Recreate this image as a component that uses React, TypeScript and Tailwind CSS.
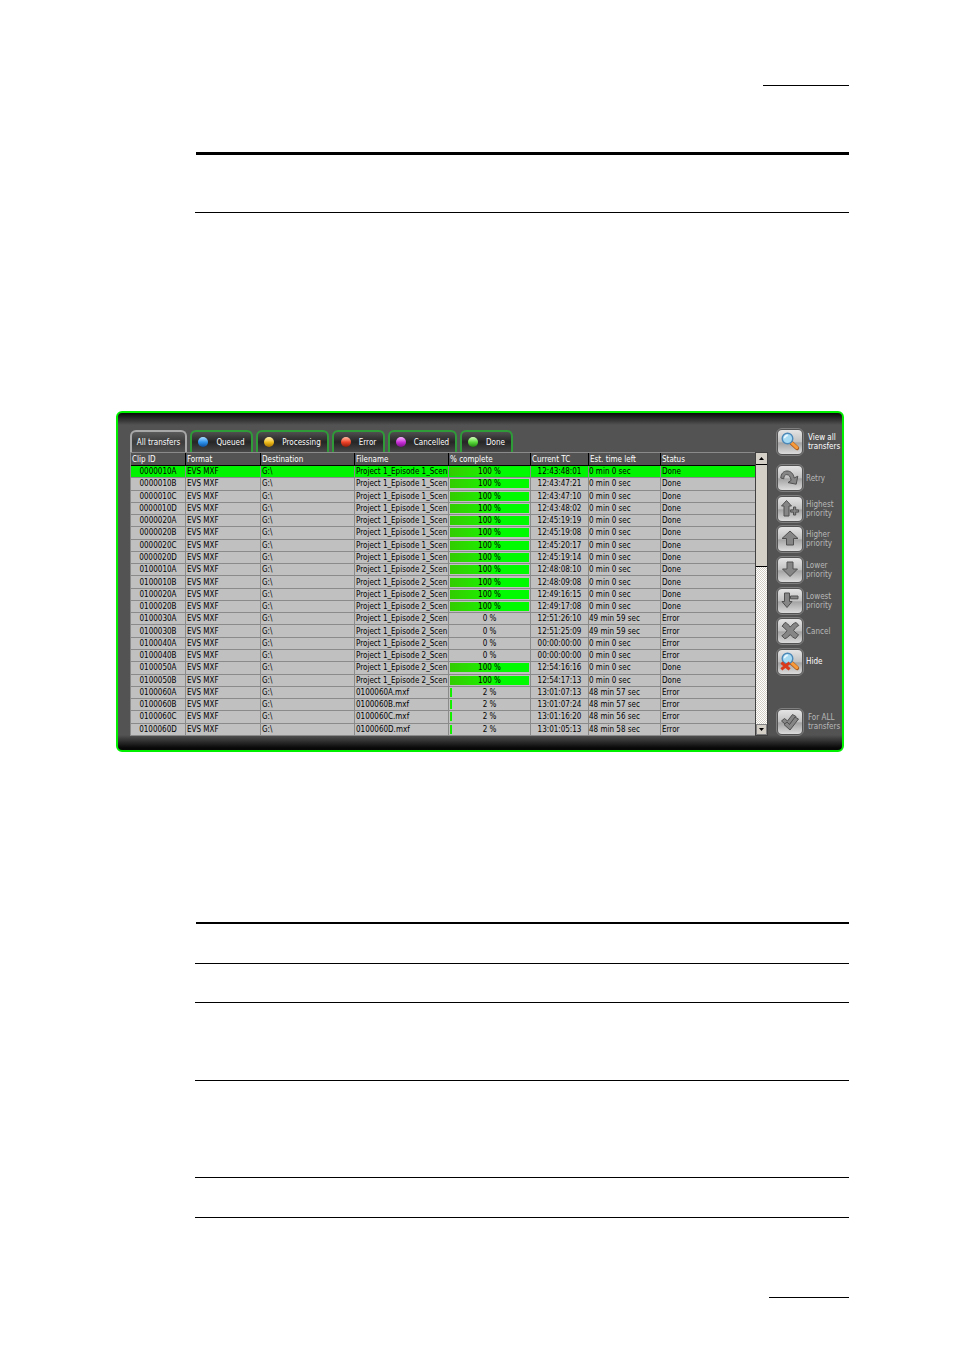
import { useState, type ReactNode } from "react";
import clsx from "clsx";

type Transfer = {
  id: string;
  file: string;
  percent: number;
  timecode: string;
  left: string;
  status: string;
};

const row = (
  id: string,
  file: string,
  percent: number,
  timecode: string,
  left: string,
  status: string
): Transfer => ({ id, file, percent, timecode, left, status });

const EP1 = "Project 1_Episode 1_Scen";
const EP2 = "Project 1_Episode 2_Scen";

const transfers: Transfer[] = [
  row("0000010A", EP1, 100, "12:43:48:01", "0 min 0 sec", "Done"),
  row("0000010B", EP1, 100, "12:43:47:21", "0 min 0 sec", "Done"),
  row("0000010C", EP1, 100, "12:43:47:10", "0 min 0 sec", "Done"),
  row("0000010D", EP1, 100, "12:43:48:02", "0 min 0 sec", "Done"),
  row("0000020A", EP1, 100, "12:45:19:19", "0 min 0 sec", "Done"),
  row("0000020B", EP1, 100, "12:45:19:08", "0 min 0 sec", "Done"),
  row("0000020C", EP1, 100, "12:45:20:17", "0 min 0 sec", "Done"),
  row("0000020D", EP1, 100, "12:45:19:14", "0 min 0 sec", "Done"),
  row("0100010A", EP2, 100, "12:48:08:10", "0 min 0 sec", "Done"),
  row("0100010B", EP2, 100, "12:48:09:08", "0 min 0 sec", "Done"),
  row("0100020A", EP2, 100, "12:49:16:15", "0 min 0 sec", "Done"),
  row("0100020B", EP2, 100, "12:49:17:08", "0 min 0 sec", "Done"),
  row("0100030A", EP2, 0, "12:51:26:10", "49 min 59 sec", "Error"),
  row("0100030B", EP2, 0, "12:51:25:09", "49 min 59 sec", "Error"),
  row("0100040A", EP2, 0, "00:00:00:00", "0 min 0 sec", "Error"),
  row("0100040B", EP2, 0, "00:00:00:00", "0 min 0 sec", "Error"),
  row("0100050A", EP2, 100, "12:54:16:16", "0 min 0 sec", "Done"),
  row("0100050B", EP2, 100, "12:54:17:13", "0 min 0 sec", "Done"),
  row("0100060A", "0100060A.mxf", 2, "13:01:07:13", "48 min 57 sec", "Error"),
  row("0100060B", "0100060B.mxf", 2, "13:01:07:24", "48 min 57 sec", "Error"),
  row("0100060C", "0100060C.mxf", 2, "13:01:16:20", "48 min 56 sec", "Error"),
  row("0100060D", "0100060D.mxf", 2, "13:01:05:13", "48 min 58 sec", "Error"),
];

const columns = [
  { label: "Clip ID", width: "w-[55px]" },
  { label: "Format", width: "w-[75px]" },
  { label: "Destination", width: "w-[94px]" },
  { label: "Filename", width: "w-[94px]" },
  { label: "% complete", width: "w-[82px]" },
  { label: "Current TC", width: "w-[58px]" },
  { label: "Est. time left", width: "w-[72px]" },
  { label: "Status", width: "w-[95px]" },
];

const tabs = [
  { label: "All transfers", width: "w-[57px]" },
  { label: "Queued", width: "w-[63px]", dot: "from-[#a8dcff] via-[#2f95ee] to-[#0d4f9c]" },
  { label: "Processing", width: "w-[73px]", dot: "from-[#fff2a8] via-[#f2c11c] to-[#a87400]" },
  { label: "Error", width: "w-[53px]", dot: "from-[#ffb8a0] via-[#f2442a] to-[#8c1c08]" },
  { label: "Cancelled", width: "w-[69px]", dot: "from-[#f4b0ff] via-[#cc30dc] to-[#7a1088]" },
  { label: "Done", width: "w-[53px]", dot: "from-[#d0ffb8] via-[#5cdc3c] to-[#1f8410]" },
];

const Glyph = ({ children }: { children: ReactNode }) => (
  <svg
    viewBox="0 0 24 24"
    className="size-6"
    fill="#868686"
    stroke="#505050"
    strokeWidth="1"
    strokeLinejoin="round"
    aria-hidden="true"
  >
    {children}
  </svg>
);

const Magnifier = () => (
  <>
    <path d="M13 12.500l6 5.500" stroke="#a85a1c" strokeWidth="4.400" strokeLinecap="round" />
    <path d="M13.800 13l5 4.600" stroke="#f79a3c" strokeWidth="3" strokeLinecap="round" />
    <circle cx="9.500" cy="8.500" r="5.300" fill="#a6d9f2" stroke="#4d89b8" strokeWidth="1.400" />
    <path d="M6.600 8.200a3 3 0 0 1 3.200-2.800" fill="none" stroke="#eefaff" strokeWidth="1.600" />
  </>
);

const viewAll = { label: "View all transfers", active: true, wide: true, icon: <Magnifier /> };

const actions = [
  {
    label: "Retry",
    icon: (
      <path d="M2.800 12c.2-4.200 2.600-7 6.200-7 4 0 6.300 2.700 7.200 7l3.600-1.800-1.600 8-8.200-1.600 3.200-2.300c-.8-3.600-2.100-5.700-4.400-5.700-2 0-3.100 1.600-3 4.200z" />
    ),
  },
  {
    label: "Highest priority",
    icon: (
      <>
        <path d="M8.500 3.500l5 5.500h-2.500v10h-5v-10h-2.500z" />
        <path d="M15.500 10h2.200v2.900h2.900v2.200h-2.900v2.900h-2.200v-2.900h-2.900v-2.200h2.900z" />
      </>
    ),
  },
  { label: "Higher priority", icon: <path d="M12 4l8 7.500h-4.500v6.500h-7v-6.500h-4.500z" /> },
  { label: "Lower priority", icon: <path d="M9 4h6v7h4.500l-7.500 7.500-7.500-7.500h4.500z" /> },
  {
    label: "Lowest priority",
    icon: (
      <>
        <path d="M6.500 4h5v8.500h2.500l-5 6-5-6h2.500z" />
        <path d="M12.500 7h7.500v2.800h-7.500z" />
      </>
    ),
  },
  {
    label: "Cancel",
    icon: (
      <path d="M7 3.500c1.700.2 3.800 2.300 5.200 4.600 1.900-2.500 4-4.400 6-4.500l2.600 2.900c-2.200 1-4 2.900-5.200 5 1.600 2 3.200 3.300 5 4.200l-3 3.800c-2-.5-3.800-2-5.400-4-1.700 2.200-3.500 3.700-5.500 4.200l-2.900-3c2-1.100 3.800-2.900 5.100-5-1.500-1.900-3-3.400-4.800-4.500z" />
    ),
  },
  {
    label: "Hide",
    active: true,
    icon: (
      <>
        <Magnifier />
        <path
          d="M4.500 13.500l6 5M10.500 13.500l-6 5"
          stroke="#d93a1c"
          strokeWidth="3"
          strokeLinecap="square"
        />
      </>
    ),
  },
];

const forAll = {
  label: "For ALL transfers",
  wide: true,
  icon: (
    <>
      <path d="M3.500 11l3-2.500 3 2.500 5-6.500 3.500 2-8 10z" />
      <path d="M6 14.500l3-2.500 2.500 2.500 5.500-7.500 3.500 2-8.500 11z" />
    </>
  ),
};

type ActionProps = { label: string; icon: ReactNode; active?: boolean; wide?: boolean };

const ActionButton = ({ label, icon, active, wide }: ActionProps) => (
  <button
    type="button"
    className={clsx(
      "flex h-7 items-center text-left",
      wide ? "gap-1" : "gap-[2px]",
      active ? "text-white" : "text-[#b8b8b8]"
    )}
  >
    <span className="size-7 shrink-0 rounded-md border border-[#808080] p-px">
      <span className="flex size-6 items-center justify-center rounded-[4px] bg-[linear-gradient(to_bottom,#e4e4e4_0%,#c2c2c2_48%,#a4a4a4_54%,#dcdcdc_100%)]">
        <Glyph>{icon}</Glyph>
      </span>
    </span>
    <span className="w-8">{label}</span>
  </button>
);

const Tabs = () => {
  const [current, setCurrent] = useState("All transfers");

  return (
    <div role="tablist" className="flex gap-[3px]">
      {tabs.map(({ label, width, dot }) => (
        <button
          key={label}
          type="button"
          role="tab"
          aria-selected={label === current}
          onClick={() => setCurrent(label)}
          className={clsx(
            "flex h-[22px] items-center justify-center rounded-t-md border-2 border-b-0 whitespace-nowrap text-white",
            width,
            label === current
              ? "border-[#a8a8a8] bg-linear-to-b from-[#5c5c5c] via-[#3c3c3c] to-[#535353]"
              : "border-[#2f9a38] bg-linear-to-b from-[#505050] via-[#262626] to-[#484848]",
            dot && "gap-2"
          )}
        >
          {dot && <span className={clsx("size-[10px] shrink-0 rounded-full bg-linear-to-b", dot)} />}
          <span>{label}</span>
        </button>
      ))}
    </div>
  );
};

const Percent = ({ value }: { value: number }) => (
  <div className="relative mx-px h-[11px] leading-[11px]">
    <div
      className="absolute top-px bottom-px left-0 bg-linear-to-r from-[#32cc00] to-[#00fa00] to-60%"
      style={{ width: `${value}%` }}
    />
    <span className="relative block text-center">{value} %</span>
  </div>
);

const TransferTable = () => (
  <div className="min-w-0 flex-1">
    <table className="h-[284px] w-full table-fixed border-separate border-spacing-0 border-t border-l border-[#8a8a8a] text-black">
      <thead>
        <tr>
          {columns.map(({ label, width }) => (
            <th
              key={label}
              scope="col"
              className={clsx(
                "h-[13px] border-r border-b border-black bg-[#535353] p-0 pl-px text-left font-normal whitespace-nowrap text-white",
                width
              )}
            >
              {label}
            </th>
          ))}
        </tr>
      </thead>
      <tbody>
        {transfers.map(({ id, file, percent, timecode, left, status }, i) => (
          <tr
            key={id}
            className={clsx(
              "[&>td]:h-3 [&>td]:border-r [&>td]:border-b [&>td]:border-[#8a8a8a] [&>td]:p-0 [&>td]:whitespace-nowrap",
              i === 0 ? "bg-[#00f400]" : "bg-[#c0c0c0]"
            )}
          >
            <td className="text-center">{id}</td>
            <td>
              <div className="px-px">EVS MXF</div>
            </td>
            <td>
              <div className="px-px">G:\</div>
            </td>
            <td>
              <div className="pl-px">{file}</div>
            </td>
            <td>
              <Percent value={percent} />
            </td>
            <td className="text-center">{timecode}</td>
            <td>{left}</td>
            <td>
              <div className="px-px">{status}</div>
            </td>
          </tr>
        ))}
      </tbody>
    </table>
  </div>
);

const ScrollBar = () => (
  <div className="flex w-[13px] flex-col border border-[#404040] bg-[#f0efec] bg-[repeating-conic-gradient(#d4d0c8_0_25%,#ffffff_0_50%)] bg-[length:2px_2px]">
    <button
      type="button"
      aria-label="Scroll up"
      className="flex h-3 items-center justify-center border-b border-black bg-[#d4d0c8]"
    >
      <svg viewBox="0 0 5 3" className="h-[3px] w-[5px]" aria-hidden="true">
        <path d="M0 3L2.500 0L5 3z" />
      </svg>
    </button>
    <div className="h-[102px] border-b border-black bg-[#d4d0c8]" />
    <button
      type="button"
      aria-label="Scroll down"
      className="mt-auto flex h-[11px] items-center justify-center border border-[#808080] bg-[#d4d0c8]"
    >
      <svg viewBox="0 0 5 3" className="h-[3px] w-[5px]" aria-hidden="true">
        <path d="M0 0L2.500 3L5 0z" />
      </svg>
    </button>
  </div>
);

const TransferPanel = () => (
  <section className="mt-[198px] mr-[110px] ml-[116px] flex rounded-md border-2 border-[#00f000] bg-[#535353] bg-[linear-gradient(to_bottom,#080808_0,#535353_12px,#535353_calc(100%_-_15px),#080808_calc(100%_-_2px))] pt-[15px] pb-[14px] pl-3 font-['DejaVu_Sans_Condensed','DejaVu_Sans',sans-serif] text-[8px] leading-[9px]">
    <div className="min-w-0 flex-1 pt-[2px]">
      <Tabs />
      <div className="flex">
        <TransferTable />
        <ScrollBar />
      </div>
    </div>
    <div className="ml-2 flex w-[66px] flex-col">
      <ActionButton {...viewAll} />
      <div className="mt-2 flex h-[212px] flex-col justify-between">
        {actions.map((action) => (
          <ActionButton key={action.label} {...action} />
        ))}
      </div>
      <div className="mt-auto">
        <ActionButton {...forAll} />
      </div>
    </div>
  </section>
);

const App = () => {
  return (
    <main className="min-h-screen bg-white">
      <div className="mr-[105px] ml-[195px] pt-[85px]">
        <hr className="ml-auto w-[86px] border-black" />
        <hr className="mt-[66px] ml-px border-t-[3px] border-black" />
        <hr className="mt-[57px] border-black" />
      </div>

      <TransferPanel />

      <div className="mr-[105px] ml-[195px] pt-[170px] pb-[52px]">
        <hr className="ml-px border-t-2 border-black" />
        <hr className="mt-[39px] border-black" />
        <hr className="mt-[38px] border-black" />
        <hr className="mt-[77px] border-black" />
        <hr className="mt-24 border-black" />
        <hr className="mt-[39px] border-black" />
        <hr className="mt-[79px] ml-auto w-20 border-black" />
      </div>
    </main>
  );
};

export default App;
